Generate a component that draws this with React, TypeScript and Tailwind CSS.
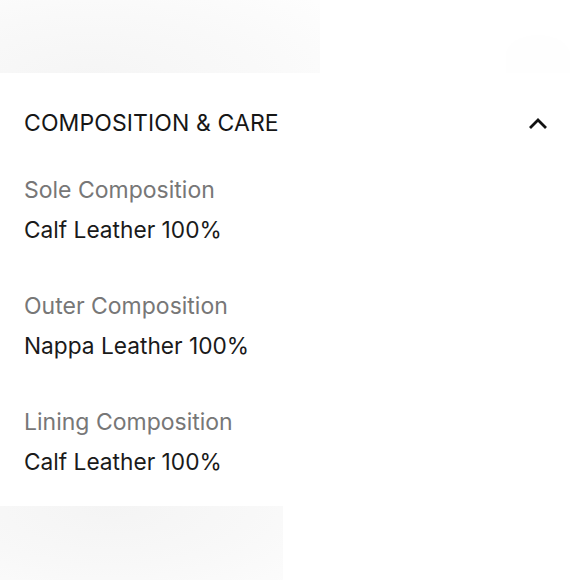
const groups = [
  { label: "Sole Composition", value: "Calf Leather 100%" },
  { label: "Outer Composition", value: "Nappa Leather 100%" },
  { label: "Lining Composition", value: "Calf Leather 100%" },
];

export default function App() {
  return (
    <div className="w-[580px] h-[580px] bg-white overflow-hidden font-['Inter','Liberation_Sans',sans-serif]">
      {/* faint image edges from the cards around */}
      <div className="flex h-[73px] justify-between">
        <div className="w-[320px] h-full bg-[radial-gradient(ellipse_300px_120px_at_90px_80px,#f5f5f5,#f9f9f9_55%,#fdfdfd_100%)]" />
        <div className="w-[64px] h-[38px] mt-[35px] mr-[10px] rounded-t-[50%] bg-[#fefefe]" />
      </div>

      <div className="pl-6 pr-8 pt-[30px] pb-[24px]">
        <div className="flex items-center justify-between">
          <h2 className="text-[23px] leading-[40px] text-[#161616] tracking-[0.1px]">
            COMPOSITION &amp; CARE
          </h2>
          <svg width="22" height="16" viewBox="0 0 22 16" className="mt-[-1px] mr-[-1px]">
            <path
              d="M3 13 L11 5 L19 13"
              fill="none"
              stroke="#111"
              strokeWidth="2.8"
            />
          </svg>
        </div>

        <div className="mt-[27px] flex flex-col gap-[36px]">
          {groups.map((g, i) => (
            <div key={i}>
              <div className="text-[23px] leading-[40px] text-[#777777]">
                {g.label}
              </div>
              <div className="text-[22.7px] leading-[40px] text-[#1a1a1a]">
                {g.value}
              </div>
            </div>
          ))}
        </div>
      </div>

      <div className="w-[283px] h-[80px] bg-[radial-gradient(ellipse_260px_110px_at_110px_0px,#f4f4f4,#f8f8f8_55%,#fcfcfc_100%)]" />
    </div>
  );
}
